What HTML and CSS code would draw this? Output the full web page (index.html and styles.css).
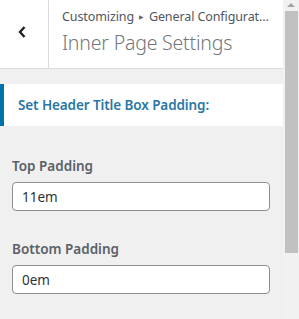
FILE: index.html
```html
<!DOCTYPE html>
<html lang="en">
<head>
  <meta charset="UTF-8" />
  <title>Inner Page Settings</title>
  <link rel="stylesheet" href="styles.css">
</head>
<body>
  <div class="frame">
    <div class="panel">
      <div class="header">
        <button class="back" aria-label="Back">
          <svg width="12" height="16" viewBox="0 0 12 16"><path d="M8.5 3 L4 8 L8.5 13" fill="none" stroke="#1d2327" stroke-width="2.4"/></svg>
        </button>
        <div class="titles">
          <div class="crumb">Customizing<span class="sep">&#9654;</span>General Configurat...</div>
          <div class="title">Inner Page Settings</div>
        </div>
      </div>

      <div class="section-title">Set Header Title Box Padding:</div>

      <div class="fields">
        <label class="field">
          <span class="label">Top Padding</span>
          <input type="text" value="11em">
        </label>
        <label class="field">
          <span class="label">Bottom Padding</span>
          <input type="text" value="0em">
        </label>
      </div>
    </div>

    <div class="scrollbar">
      <div class="arrow"></div>
      <div class="thumb"></div>
    </div>
  </div>
</body>
</html>
```

FILE: styles.css
```css
html, body {
  margin: 0;
  padding: 0;
}
body {
  font-family: "Noto Sans", "Open Sans", sans-serif;
  background-color: #f0f0f1;
  color: #50575e;
  width: 299px;
  height: 319px;
  overflow: hidden;
}
.frame {
  display: flex;
  height: 319px;
}
.panel {
  flex: 1;
  min-width: 0;
}
.header {
  display: flex;
  height: 68px;
  background-color: #fff;
  border-bottom: 1px solid #dcdcde;
}
.back {
  width: 49px;
  border: none;
  border-right: 1px solid #dcdcde;
  background: #fff;
  padding: 0 4px 4px 0;
  display: flex;
  align-items: center;
  justify-content: center;
}
.titles {
  padding: 8px 0 0 13px;
  white-space: nowrap;
  overflow: hidden;
}
.crumb {
  font-size: 12.5px;
  line-height: 18px;
  color: #50575e;
  letter-spacing: -0.1px;
}
.sep {
  font-size: 6px;
  vertical-align: 2px;
  margin: 0 5px;
  color: #646970;
}
.title {
  font-size: 19.5px;
  font-weight: 300;
  line-height: 28px;
  margin-top: 3px;
  color: #72777c;
  letter-spacing: -0.2px;
}
.section-title {
  margin-top: 15px;
  background-color: #fff;
  border-left: 4px solid #0073aa;
  padding: 10px 14px;
  height: 22px;
  line-height: 22px;
  font-size: 13.5px;
  font-weight: 600;
  color: #2a77a6;
  letter-spacing: -0.1px;
}
.fields {
  padding: 30px 13px 0 12px;
  display: flex;
  flex-direction: column;
  gap: 28px;
}
.field {
  display: flex;
  flex-direction: column;
  gap: 6px;
}
.label {
  font-size: 13.5px;
  font-weight: 600;
  line-height: 20px;
  color: #5b6167;
}
.field input {
  box-sizing: border-box;
  height: 29px;
  width: 100%;
  border: 1px solid #8c8f94;
  border-radius: 4px;
  padding: 0 9px;
  font-family: inherit;
  font-size: 13.5px;
  color: #2c3338;
  background: #fff;
}
.scrollbar {
  width: 16px;
  background-color: #f1f1f1;
  display: flex;
  flex-direction: column;
  align-items: center;
}
.arrow {
  margin-top: 3px;
  width: 0;
  height: 0;
  border-left: 4px solid transparent;
  border-right: 4px solid transparent;
  border-bottom: 4px solid #a3a3a3;
}
.thumb {
  margin-top: 4px;
  width: 13px;
  height: 242px;
  background-color: #c1c1c1;
}
```
